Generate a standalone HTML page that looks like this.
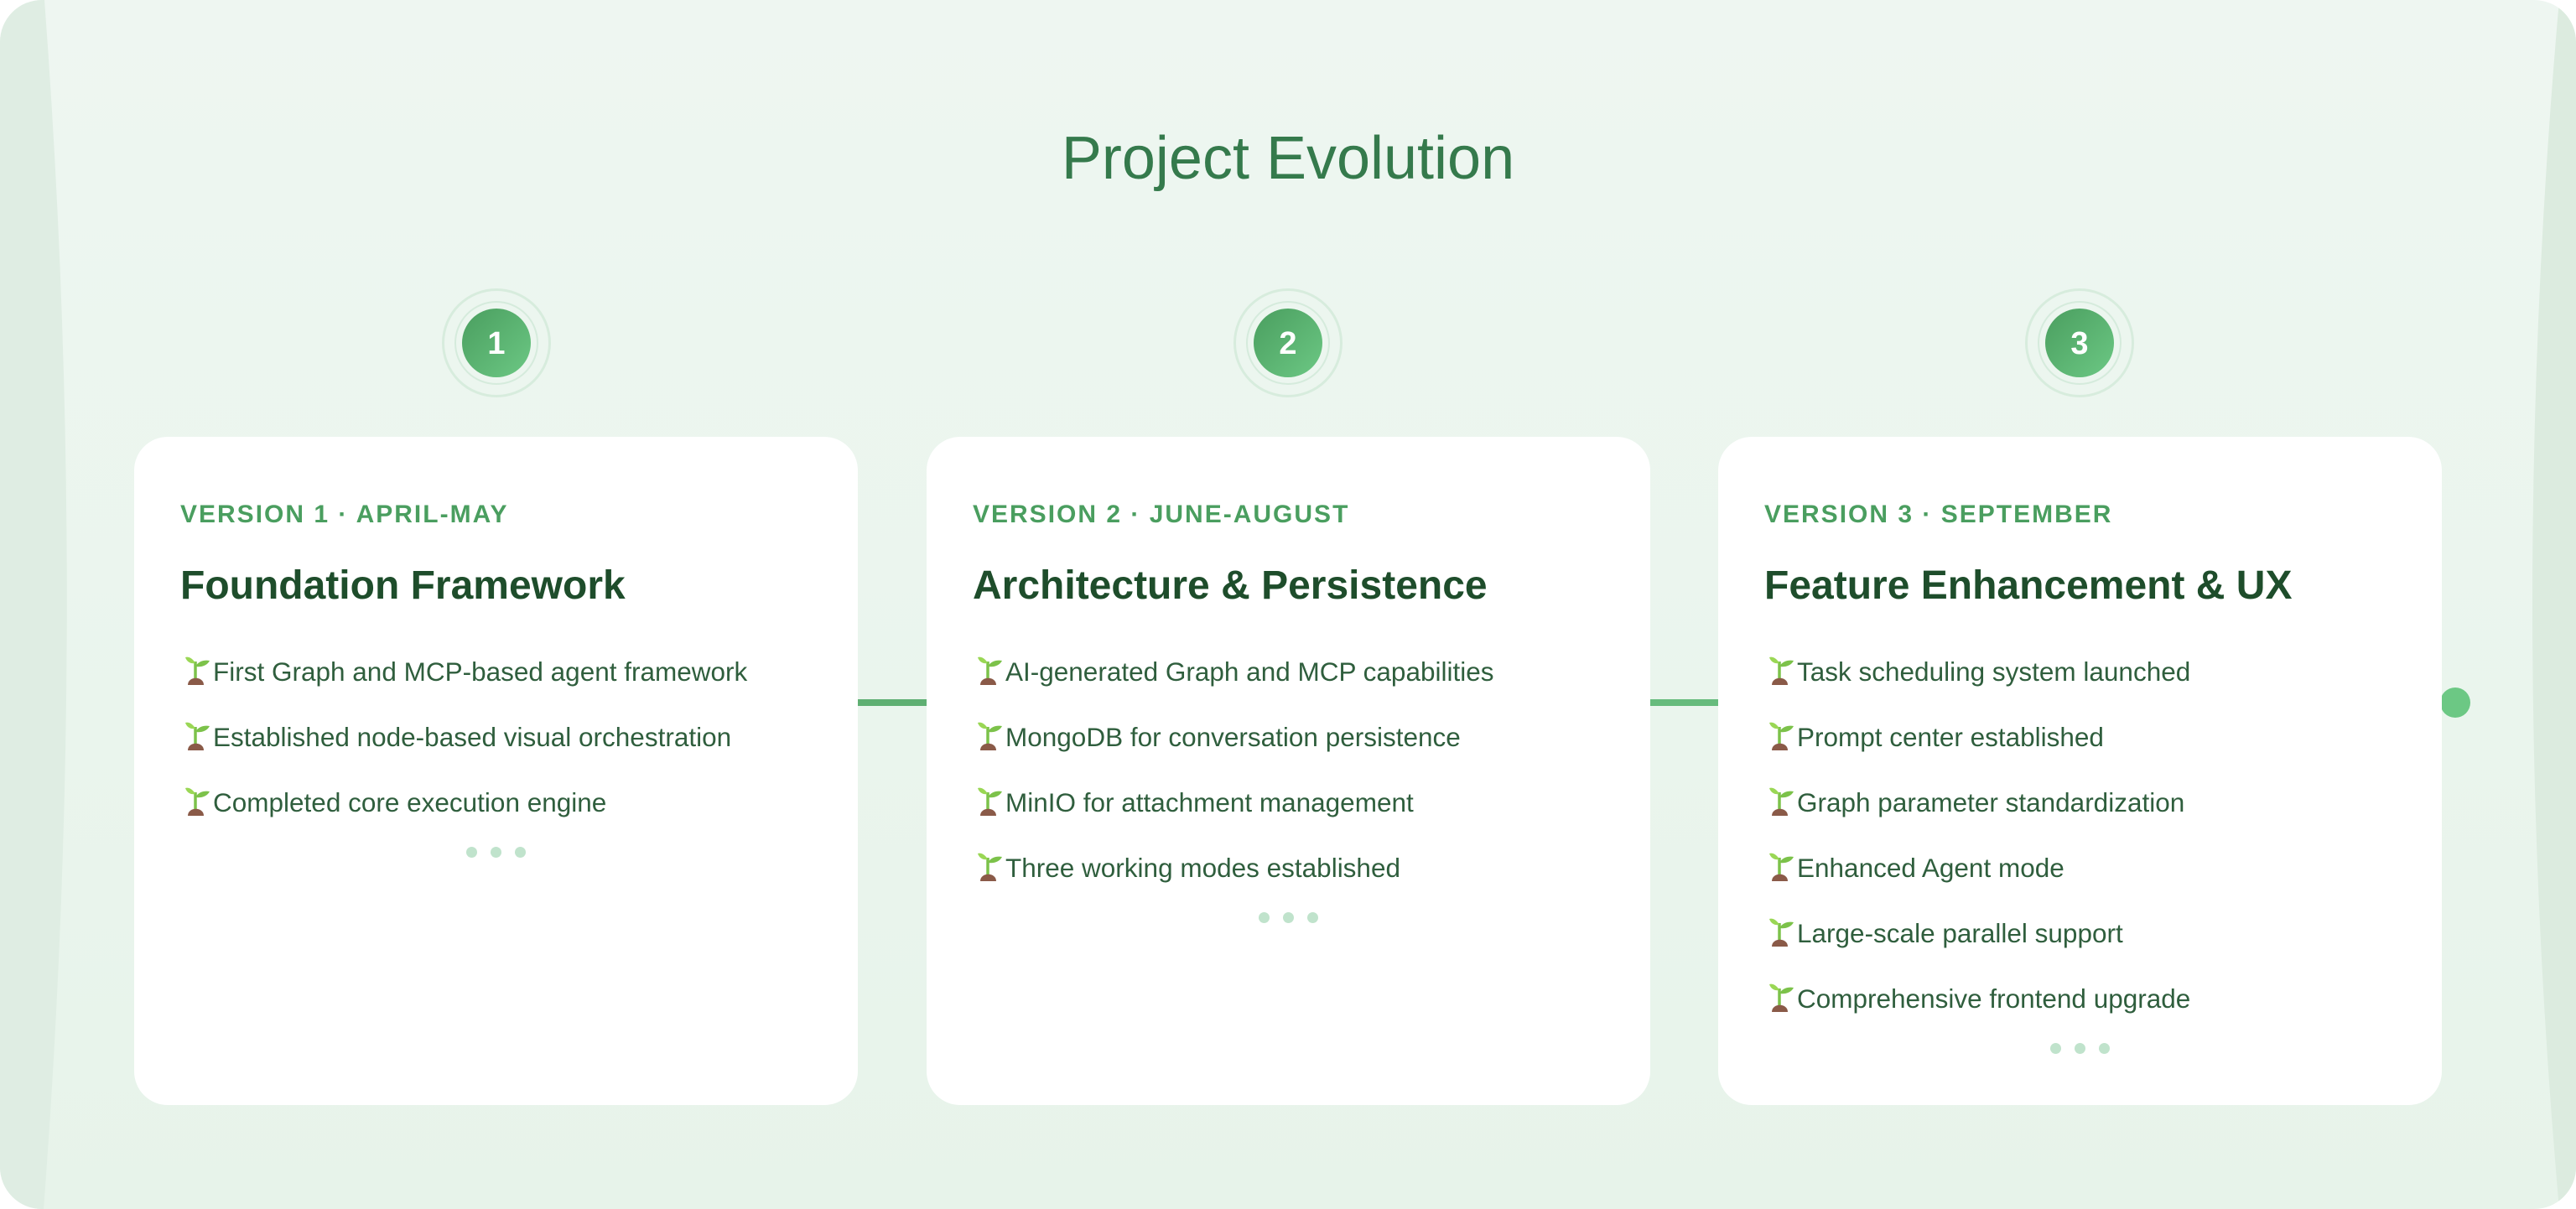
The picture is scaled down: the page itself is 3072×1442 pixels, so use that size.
<!DOCTYPE html>
<html><head><meta charset="utf-8"><style>
*{margin:0;padding:0;box-sizing:border-box}
html,body{width:3072px;height:1442px;overflow:hidden;background:#fff}
.wrap{position:absolute;left:0;top:0;width:3072px;height:1442px;border-radius:50px;overflow:hidden;background:linear-gradient(180deg,#eef6f1 0%,#eaf5ed 60%,#e7f3ea 100%)}
.title{position:absolute;left:0;width:3072px;top:148px;text-align:center;font-family:"Liberation Sans",sans-serif;font-weight:300;font-size:72px;color:#357a4c;letter-spacing:0px}
.ring{position:absolute;width:130px;height:130px;border-radius:50%;border:3px solid #d7ecdd;top:344px}
.ring2{position:absolute;left:12px;top:12px;width:100px;height:100px;border-radius:50%;border:2px solid #d5ebdc}
.num{position:absolute;left:21px;top:21px;width:82px;height:82px;border-radius:50%;background:linear-gradient(135deg,#4a9e5f,#6cc884);color:#fff;font-family:"Liberation Sans",sans-serif;font-weight:bold;font-size:38px;text-align:center;line-height:84px}
.card{position:absolute;top:521px;width:863px;height:797px;background:#fff;border-radius:40px}
.lab{position:absolute;left:55px;top:76px;font-family:"Liberation Sans",sans-serif;font-weight:bold;font-size:30px;letter-spacing:2px;color:#4a9e5f}
.h{position:absolute;left:55px;top:150px;font-family:"Liberation Sans",sans-serif;font-weight:bold;font-size:48px;color:#1e4d2b}
.items{position:absolute;left:60px;top:260px}
.it{height:78px;display:flex;align-items:flex-start;font-family:"Liberation Sans",sans-serif;font-size:31.5px;color:#2f5e3d;line-height:40px}
.it svg{width:32px;height:36px;margin-right:2px;flex:none}
.dots{position:absolute;left:0;width:863px;text-align:center}
.dots i{display:inline-block;width:13px;height:13px;border-radius:50%;background:#c0e3cc;margin:0 8px}
.line{position:absolute;top:834px;height:8px;background:#5eaf72}
</style></head><body>
<div class="wrap">
<svg width="3072" height="1442" style="position:absolute;left:0;top:0">
<path d="M0,0 L53,0 Q107,721 52,1442 L0,1442 Z" fill="#dfede3"/>
<path d="M3072,0 L3052,0 Q2988,721 3052,1442 L3072,1442 Z" fill="#dcebdf"/>
</svg>
<div class="title">Project Evolution</div>

<div class="ring" style="left:527px"><div class="ring2"></div><div class="num">1</div></div>
<div class="ring" style="left:1471px"><div class="ring2"></div><div class="num">2</div></div>
<div class="ring" style="left:2415px"><div class="ring2"></div><div class="num">3</div></div>

<div class="line" style="left:1020px;width:90px"></div>
<div class="line" style="left:1964px;width:90px;background:#66bb7c"></div>
<div style="position:absolute;left:2910px;top:820px;width:36px;height:36px;border-radius:50%;background:#6cc884"></div>

<svg width="0" height="0" style="position:absolute"><defs><symbol id="sp" viewBox="0 0 32 36">
<path d="M13 32 L13 8" stroke="#7cc24a" stroke-width="3.5"/>
<path d="M13 10 C9 3 4 2 1 3 C3 9 8 11 13 10Z" fill="#9ad755"/>
<path d="M13 14 C17 7 24 6 30 7 C27 13 20 15 13 14Z" fill="#7cc24a"/>
<path d="M4 36 C4 25 23 25 23 36Z" fill="#8a5a48"/>
</symbol></defs></svg>

<div class="card" style="left:160px">
<div class="lab">VERSION 1 · APRIL-MAY</div>
<div class="h">Foundation Framework</div>
<div class="items">
<div class="it"><svg><use href="#sp"/></svg>First Graph and MCP-based agent framework</div>
<div class="it"><svg><use href="#sp"/></svg>Established node-based visual orchestration</div>
<div class="it"><svg><use href="#sp"/></svg>Completed core execution engine</div>
</div>
<div class="dots" style="top:489px"><i></i><i></i><i></i></div>
</div>

<div class="card" style="left:1105px">
<div class="lab">VERSION 2 · JUNE-AUGUST</div>
<div class="h">Architecture &amp; Persistence</div>
<div class="items">
<div class="it"><svg><use href="#sp"/></svg>AI-generated Graph and MCP capabilities</div>
<div class="it"><svg><use href="#sp"/></svg>MongoDB for conversation persistence</div>
<div class="it"><svg><use href="#sp"/></svg>MinIO for attachment management</div>
<div class="it"><svg><use href="#sp"/></svg>Three working modes established</div>
</div>
<div class="dots" style="top:567px"><i></i><i></i><i></i></div>
</div>

<div class="card" style="left:2049px">
<div class="lab">VERSION 3 · SEPTEMBER</div>
<div class="h">Feature Enhancement &amp; UX</div>
<div class="items">
<div class="it"><svg><use href="#sp"/></svg>Task scheduling system launched</div>
<div class="it"><svg><use href="#sp"/></svg>Prompt center established</div>
<div class="it"><svg><use href="#sp"/></svg>Graph parameter standardization</div>
<div class="it"><svg><use href="#sp"/></svg>Enhanced Agent mode</div>
<div class="it"><svg><use href="#sp"/></svg>Large-scale parallel support</div>
<div class="it"><svg><use href="#sp"/></svg>Comprehensive frontend upgrade</div>
</div>
<div class="dots" style="top:723px"><i></i><i></i><i></i></div>
</div>
</div>
</body></html>
